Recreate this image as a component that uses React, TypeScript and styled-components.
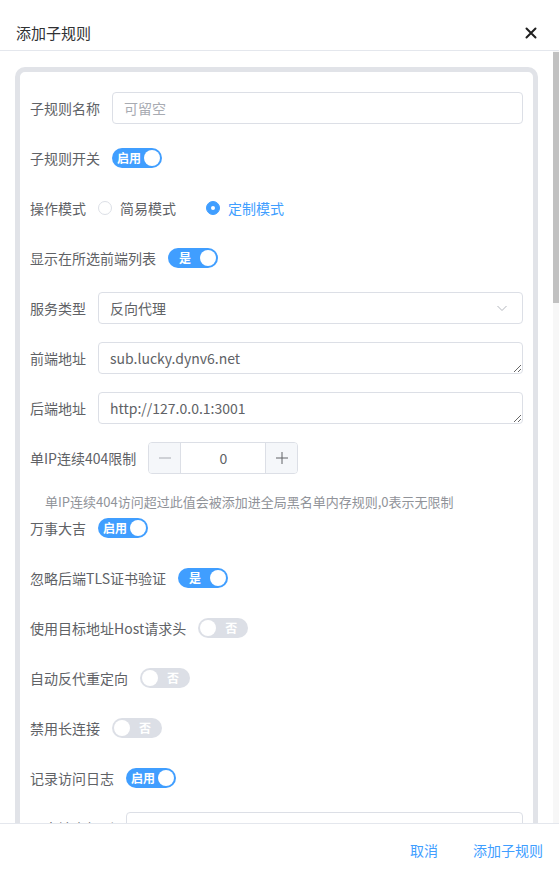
import React from "react";
import styled, { createGlobalStyle } from "styled-components";

const GlobalStyle = createGlobalStyle`
  html, body {
    margin: 0;
    padding: 0;
    background: #ffffff;
  }
  body {
    font-family: "Noto Sans CJK SC", "Noto Sans", sans-serif;
    color: #606266;
  }
  * {
    box-sizing: border-box;
  }
`;

type SwitchItem = { label: string; on: boolean; text: string };

const topSwitches: SwitchItem[] = [
  { label: "万事大吉", on: true, text: "启用" },
  { label: "忽略后端TLS证书验证", on: true, text: "是" },
  { label: "使用目标地址Host请求头", on: false, text: "否" },
  { label: "自动反代重定向", on: false, text: "否" },
  { label: "禁用长连接", on: false, text: "否" },
  { label: "记录访问日志", on: true, text: "启用" },
];

export default function App() {
  return (
    <>
      <GlobalStyle />
      <Dialog>
        <Header>
          <Title>添加子规则</Title>
          <CloseButton aria-label="close">
            <svg width="12" height="12" viewBox="0 0 12 12">
              <path
                d="M1.5 1.5 L10.5 10.5 M10.5 1.5 L1.5 10.5"
                stroke="#1f1f1f"
                strokeWidth="2"
                strokeLinecap="round"
              />
            </svg>
          </CloseButton>
        </Header>
        <Body>
          <Viewport>
            <Card>
              <FormItem>
                <Label>子规则名称</Label>
                <TextInput placeholder="可留空" />
              </FormItem>
              <FormItem>
                <Label>子规则开关</Label>
                <Switch on={true} text="启用" />
              </FormItem>
              <FormItem>
                <Label>操作模式</Label>
                <RadioGroup>
                  <Radio>
                    <RadioDot $checked={false} />
                    <RadioText $checked={false}>简易模式</RadioText>
                  </Radio>
                  <Radio>
                    <RadioDot $checked={true} />
                    <RadioText $checked={true}>定制模式</RadioText>
                  </Radio>
                </RadioGroup>
              </FormItem>
              <FormItem>
                <Label>显示在所选前端列表</Label>
                <Switch on={true} text="是" />
              </FormItem>
              <FormItem>
                <Label>服务类型</Label>
                <SelectBox>
                  <span>反向代理</span>
                  <svg width="12" height="12" viewBox="0 0 12 12">
                    <path
                      d="M1.5 4 L6 8.5 L10.5 4"
                      fill="none"
                      stroke="#b4b7be"
                      strokeWidth="1"
                    />
                  </svg>
                </SelectBox>
              </FormItem>
              <FormItem>
                <Label>前端地址</Label>
                <TextArea rows={1} defaultValue="sub.lucky.dynv6.net" />
              </FormItem>
              <FormItem>
                <Label>后端地址</Label>
                <TextArea rows={1} defaultValue="http://127.0.0.1:3001" />
              </FormItem>
              <FormItem>
                <Label>单IP连续404限制</Label>
                <NumberBox>
                  <StepButton $side="left">
                    <svg width="14" height="14" viewBox="0 0 14 14">
                      <path d="M1 7 H13" stroke="#a8abb2" strokeWidth="1" />
                    </svg>
                  </StepButton>
                  <NumberValue>0</NumberValue>
                  <StepButton $side="right">
                    <svg width="14" height="14" viewBox="0 0 14 14">
                      <path d="M1 7 H13 M7 1 V13" stroke="#606266" strokeWidth="1" />
                    </svg>
                  </StepButton>
                </NumberBox>
              </FormItem>
              <Help>单IP连续404访问超过此值会被添加进全局黑名单内存规则,0表示无限制</Help>
              {topSwitches.map((s) => (
                <FormItem key={s.label}>
                  <Label>{s.label}</Label>
                  <Switch on={s.on} text={s.text} />
                </FormItem>
              ))}
              <FormItem>
                <Label>日志输出级别</Label>
                <TextInput defaultValue="" />
              </FormItem>
            </Card>
          </Viewport>
          <ScrollRail>
            <ScrollThumb />
          </ScrollRail>
        </Body>
        <Footer>
          <TextButton>取消</TextButton>
          <TextButton>添加子规则</TextButton>
        </Footer>
      </Dialog>
    </>
  );
}

function Switch({ on, text }: { on: boolean; text: string }) {
  return (
    <SwitchTrack $on={on}>
      {on ? (
        <>
          <SwitchText>{text}</SwitchText>
          <Knob />
        </>
      ) : (
        <>
          <Knob />
          <SwitchText>{text}</SwitchText>
        </>
      )}
    </SwitchTrack>
  );
}

const Dialog = styled.div`
  display: flex;
  flex-direction: column;
  height: 100vh;
  background: #fff;
`;

const Header = styled.div`
  height: 51px;
  flex-shrink: 0;
  display: flex;
  align-items: flex-start;
  justify-content: space-between;
  padding: 21px 22px 0 16px;
  border-bottom: 1px solid #e4e7ed;
`;

const Title = styled.div`
  font-size: 15px;
  line-height: 24px;
  color: #303133;
`;

const CloseButton = styled.button`
  border: 0;
  background: none;
  padding: 0;
  margin-top: 6px;
  width: 12px;
  height: 12px;
  display: flex;
  cursor: pointer;
`;

const Body = styled.div`
  flex: 1;
  min-height: 0;
  display: flex;
`;

const Viewport = styled.div`
  flex: 1;
  min-width: 0;
  overflow: hidden;
`;

const ScrollRail = styled.div`
  width: 6px;
  flex-shrink: 0;
  background: #f7f7f7;
  padding-top: 1px;
`;

const ScrollThumb = styled.div`
  height: 251px;
  background: #c1c1c1;
`;

const Card = styled.div`
  margin: 16px 15px 16px 15px;
  padding: 20px 10px;
  border: 5px solid #e1e3e8;
  border-radius: 10px;
  min-height: 2340px;
`;

const FormItem = styled.div`
  display: flex;
  align-items: center;
  min-height: 32px;
  margin-bottom: 18px;
`;

const Label = styled.label`
  flex-shrink: 0;
  margin-right: 12px;
  font-size: 14px;
  line-height: 32px;
  color: #606266;
  white-space: nowrap;
`;

const fieldBase = `
  flex: 1;
  min-width: 0;
  height: 32px;
  border: 1px solid #dcdfe6;
  border-radius: 4px;
  background: #fff;
  font-family: "Noto Sans CJK SC", "Noto Sans", sans-serif;
  font-size: 14px;
  color: #606266;
  outline: none;
`;

const TextInput = styled.input`
  ${fieldBase}
  padding: 0 11px;
  &::placeholder {
    color: #a8abb2;
  }
`;

const TextArea = styled.textarea`
  ${fieldBase}
  display: block;
  padding: 4px 11px;
  line-height: 22px;
  resize: vertical;
  overflow: hidden;
`;

const SelectBox = styled.div`
  ${fieldBase}
  display: flex;
  align-items: center;
  justify-content: space-between;
  padding: 0 14px 0 11px;
`;

const RadioGroup = styled.div`
  display: flex;
  align-items: center;
  gap: 30px;
`;

const Radio = styled.div`
  display: flex;
  align-items: center;
  gap: 8px;
`;

const RadioDot = styled.span<{ $checked: boolean }>`
  width: 14px;
  height: 14px;
  border-radius: 50%;
  border: 1px solid ${(p) => (p.$checked ? "#409eff" : "#dcdfe6")};
  background: ${(p) => (p.$checked ? "#409eff" : "#fff")};
  display: flex;
  align-items: center;
  justify-content: center;
  &::after {
    content: "";
    width: 4px;
    height: 4px;
    border-radius: 50%;
    background: #fff;
    display: ${(p) => (p.$checked ? "block" : "none")};
  }
`;

const RadioText = styled.span<{ $checked: boolean }>`
  font-size: 14px;
  color: ${(p) => (p.$checked ? "#409eff" : "#606266")};
`;

const SwitchTrack = styled.div<{ $on: boolean }>`
  width: 50px;
  height: 20px;
  border-radius: 10px;
  background: ${(p) => (p.$on ? "#409eff" : "#dcdfe6")};
  display: flex;
  align-items: center;
  padding: 0 2px;
`;

const SwitchText = styled.span`
  flex: 1;
  text-align: center;
  font-size: 12px;
  font-weight: 700;
  line-height: 20px;
  color: #fff;
`;

const Knob = styled.span`
  width: 16px;
  height: 16px;
  border-radius: 50%;
  background: #fff;
  flex-shrink: 0;
`;

const NumberBox = styled.div`
  width: 150px;
  height: 32px;
  border: 1px solid #dcdfe6;
  border-radius: 4px;
  display: flex;
  overflow: hidden;
`;

const StepButton = styled.div<{ $side: "left" | "right" }>`
  width: 32px;
  background: #f5f7fa;
  display: flex;
  align-items: center;
  justify-content: center;
  ${(p) =>
    p.$side === "left"
      ? "border-right: 1px solid #dcdfe6;"
      : "border-left: 1px solid #dcdfe6;"}
`;

const NumberValue = styled.div`
  flex: 1;
  text-align: center;
  font-size: 14px;
  line-height: 30px;
  color: #606266;
`;

const Help = styled.div`
  padding-left: 15px;
  font-size: 13px;
  line-height: 20px;
  color: #909399;
`;

const Footer = styled.div`
  height: 53px;
  flex-shrink: 0;
  border-top: 1px solid #e4e7ed;
  display: flex;
  align-items: center;
  justify-content: flex-end;
  gap: 35px;
  padding: 0 16px 0 0;
`;

const TextButton = styled.button`
  border: 0;
  background: none;
  padding: 0;
  font-family: "Noto Sans CJK SC", "Noto Sans", sans-serif;
  font-size: 14px;
  color: #409eff;
  cursor: pointer;
`;
